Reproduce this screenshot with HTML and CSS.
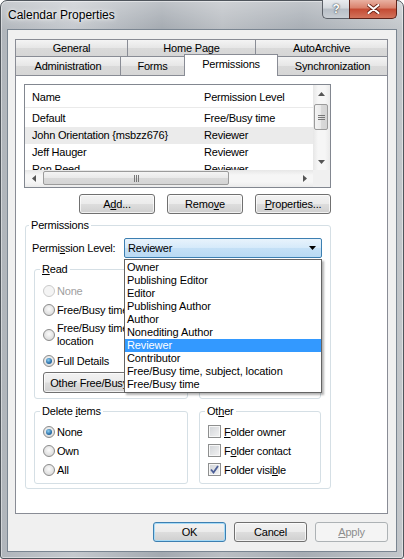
FILE: index.html
```html
<!DOCTYPE html>
<html lang="en">
<head>
<meta charset="UTF-8">
<title>Calendar Properties</title>
<link rel="stylesheet" href="styles.css">
</head>
<body>
<div class="window">
    <div class="titlebar">
        <span class="title">Calendar Properties</span>
        <div class="caption">
            <span class="cap help">?</span>
            <span class="cap close">
                <svg width="13" height="10" viewBox="0 0 13 10"><path d="M1.5 1 L11.5 9 M11.5 1 L1.5 9" stroke="#6b2418" stroke-width="3.8" stroke-linecap="round"/><path d="M1.5 1 L11.5 9 M11.5 1 L1.5 9" stroke="#fff" stroke-width="2.1" stroke-linecap="round"/></svg>
            </span>
        </div>
    </div>

    <div class="client">
        <div class="tabs">
            <div class="tab-row">
                <div class="tab t-general">General</div>
                <div class="tab t-home">Home Page</div>
                <div class="tab t-archive last">AutoArchive</div>
            </div>
            <div class="tab-row row2">
                <div class="tab t-admin">Administration</div>
                <div class="tab t-forms">Forms</div>
                <div class="tab t-perm active">Permissions</div>
                <div class="tab t-sync last">Synchronization</div>
            </div>
        </div>

        <div class="panel">
            <!-- user list -->
            <div class="listbox">
                <div class="list-view">
                    <div class="list-head"><span>Name</span><span>Permission Level</span></div>
                    <div class="list-row"><span>Default</span><span>Free/Busy time</span></div>
                    <div class="list-row hover"><span>John Orientation {msbzz676}</span><span>Reviewer</span></div>
                    <div class="list-row"><span>Jeff Hauger</span><span>Reviewer</span></div>
                    <div class="list-row"><span>Ron Reed</span><span>Reviewer</span></div>
                </div>
                <div class="vscroll">
                    <div class="sb-btn"><svg width="7" height="4" viewBox="0 0 7 4"><polygon points="0,4 3.5,0 7,4" fill="#555"/></svg></div>
                    <div class="thumb v-thumb"><span class="grip"></span></div>
                    <div class="sb-fill"></div>
                    <div class="sb-btn"><svg width="7" height="4" viewBox="0 0 7 4"><polygon points="0,0 7,0 3.5,4" fill="#555"/></svg></div>
                </div>
                <div class="hscroll">
                    <div class="sb-btn"><svg width="4" height="7" viewBox="0 0 4 7"><polygon points="4,0 4,7 0,3.5" fill="#555"/></svg></div>
                    <div class="thumb h-thumb"><span class="grip"></span></div>
                    <div class="sb-fill"></div>
                    <div class="sb-btn"><svg width="4" height="7" viewBox="0 0 4 7"><polygon points="0,0 4,3.5 0,7" fill="#555"/></svg></div>
                </div>
                <div class="sb-corner"></div>
            </div>

            <div class="list-buttons">
                <button class="btn">A<u>d</u>d...</button>
                <button class="btn">Remo<u>v</u>e</button>
                <button class="btn"><u>P</u>roperties...</button>
            </div>

            <fieldset class="group perms">
                <legend>Permissions</legend>
                <div class="level-row">
                    <span class="level-label">Permi<u>s</u>sion Level:</span>
                    <div class="combo">
                        <span>Reviewer</span>
                        <svg width="7" height="4" viewBox="0 0 7 4"><polygon points="0,0 7,0 3.5,4" fill="#000"/></svg>
                        <ul class="dropdown">
                            <li>Owner</li>
                            <li>Publishing Editor</li>
                            <li>Editor</li>
                            <li>Publishing Author</li>
                            <li>Author</li>
                            <li>Nonediting Author</li>
                            <li class="selected">Reviewer</li>
                            <li>Contributor</li>
                            <li>Free/Busy time, subject, location</li>
                            <li>Free/Busy time</li>
                        </ul>
                    </div>
                </div>

                <div class="subgroups">
                    <fieldset class="group top-group">
                        <legend><u>R</u>ead</legend>
                        <div class="opt disabled"><span class="radio"></span><span>None</span></div>
                        <div class="opt"><span class="radio"></span><span>Free/Busy time</span></div>
                        <div class="opt tall"><span class="radio"></span><span>Free/Busy time, subject,<br>location</span></div>
                        <div class="opt"><span class="radio on"></span><span>Full Details</span></div>
                        <button class="btn other-btn">Other Free/Busy...</button>
                    </fieldset>
                    <fieldset class="group top-group">
                        <legend><u>W</u>rite</legend>
                        <div class="opt"><span class="check"></span><span>Create items</span></div>
                        <div class="opt"><span class="check"></span><span>Create subfolders</span></div>
                        <div class="opt"><span class="check"></span><span>Edit own</span></div>
                        <div class="opt"><span class="check"></span><span>Edit all</span></div>
                    </fieldset>
                    <fieldset class="group low-group">
                        <legend>Delete <u>i</u>tems</legend>
                        <div class="opt"><span class="radio on"></span><span>None</span></div>
                        <div class="opt"><span class="radio"></span><span>Own</span></div>
                        <div class="opt"><span class="radio"></span><span>All</span></div>
                    </fieldset>
                    <fieldset class="group low-group">
                        <legend>Ot<u>h</u>er</legend>
                        <div class="opt"><span class="check"></span><span><u>F</u>older owner</span></div>
                        <div class="opt"><span class="check"></span><span>F<u>o</u>lder contact</span></div>
                        <div class="opt"><span class="check on"><svg width="11" height="11" viewBox="0 0 11 11"><path d="M2 5.5 L4.5 8.5 L9 2" stroke="#4a5d96" stroke-width="1.8" fill="none"/></svg></span><span>Folder visi<u>b</u>le</span></div>
                    </fieldset>
                </div>
            </fieldset>
        </div>

        <div class="dialog-buttons">
            <button class="btn default">OK</button>
            <button class="btn">Cancel</button>
            <button class="btn" disabled><u>A</u>pply</button>
        </div>
    </div>
</div>
</body>
</html>
```

FILE: styles.css
```css
* {
    box-sizing: border-box;
}
body {
    margin: 0;
    font-family: "Liberation Sans", Arial, sans-serif;
    font-size: 11px;
    letter-spacing: -0.2px;
    color: #000;
    background: #fff;
}
u {
    text-decoration: underline;
    text-underline-offset: 1px;
}

/* window frame */
.window {
    width: 404px;
    height: 559px;
    display: flex;
    flex-direction: column;
    padding: 0 6px 6px;
    border: 1px solid #4f555c;
    border-radius: 7px 7px 3px 3px;
    box-shadow: inset 0 0 0 1px rgba(255, 255, 255, 0.45);
    background:
        linear-gradient(180deg, rgba(255, 255, 255, 0.3), rgba(255, 255, 255, 0) 30px),
        linear-gradient(90deg, #b0b5bb 0%, #c5c9ce 18%, #a3a9b0 40%, #babec3 55%, #a7adb4 75%, #c3c7cb 100%);
}
.titlebar {
    height: 28px;
    display: flex;
    justify-content: space-between;
    align-items: flex-start;
}
.title {
    margin: 7px 0 0 1px;
    font-size: 12px;
    letter-spacing: 0;
    line-height: 14px;
    text-shadow: 0 0 6px #fff, 0 0 3px #fff;
}
.caption {
    display: flex;
    margin-top: -1px;
}
.cap {
    height: 19px;
    display: flex;
    align-items: center;
    justify-content: center;
    border: 1px solid #5b6068;
    border-top: none;
}
.help {
    width: 27px;
    border-right: none;
    border-radius: 0 0 0 5px;
    background: linear-gradient(#e9ecef, #d3d8dd 45%, #b7bec6 50%, #c9ced4);
    color: #fff;
    font-weight: bold;
    font-size: 12px;
    text-shadow: 0 0 2px #44494f, 0 0 1px #44494f;
}
.close {
    width: 48px;
    border-color: #5e2219;
    border-radius: 0 0 5px 0;
    background: linear-gradient(#e9b1a2, #d9806b 45%, #c44a33 50%, #d2735b);
}

/* client area */
.client {
    flex: 1;
    display: flex;
    flex-direction: column;
    padding: 9px 8px 0 7px;
    background: #f0f0f0;
    border: 1px solid #7a8591;
}

/* tabs */
.tab-row {
    display: flex;
    align-items: flex-start;
}
.tab {
    height: 17px;
    line-height: 16px;
    text-align: center;
    border: 1px solid #898c95;
    border-bottom: none;
    border-right: none;
    background: linear-gradient(#f4f4f4, #e6e6e6 50%, #dadada 51%, #d6d6d6);
}
.tab.last {
    border-right: 1px solid #898c95;
}
.row2 .tab {
    height: 19px;
    line-height: 19px;
}
.t-general { width: 112px; }
.t-home { width: 128px; }
.t-archive { width: 133px; }
.t-admin { width: 105px; }
.t-forms { width: 64px; }
.t-perm { width: 94px; }
.t-sync { width: 110px; border-left: none; }
.row2 .tab.active {
    position: relative;
    z-index: 1;
    height: 22px;
    margin: -2px 0 -1px;
    line-height: 19px;
    background: #fff;
    border-right: 1px solid #898c95;
}

.panel {
    height: 439px;
    padding: 8px 0 0 8px;
    background: #fff;
    border: 1px solid #898c95;
}

/* list view */
.listbox {
    width: 307px;
    height: 104px;
    display: grid;
    grid-template-columns: 1fr 17px;
    grid-template-rows: 1fr 17px;
    border: 1px solid #828790;
}
.list-view {
    overflow: hidden;
}
.list-head,
.list-row {
    display: grid;
    grid-template-columns: 172px 1fr;
    padding-left: 7px;
    white-space: nowrap;
}
.list-head {
    height: 23px;
    padding-top: 6px;
    border-bottom: 1px solid #eaeaea;
    margin-bottom: 2px;
}
.list-row {
    height: 17px;
    line-height: 17px;
}
.list-row.hover {
    background: #ebebeb;
}
.vscroll,
.hscroll {
    display: flex;
    background: linear-gradient(90deg, #e7e7e7, #f6f6f6 30%, #f6f6f6 70%, #ebebeb);
}
.vscroll {
    flex-direction: column;
}
.hscroll {
    background: linear-gradient(#e7e7e7, #f6f6f6 30%, #f6f6f6 70%, #ebebeb);
}
.sb-btn {
    flex: 0 0 17px;
    display: flex;
    align-items: center;
    justify-content: center;
}
.sb-fill {
    flex: 1;
}
.thumb {
    display: flex;
    align-items: center;
    justify-content: center;
    border: 1px solid #9b9b9b;
    border-radius: 2px;
}
.v-thumb {
    height: 26px;
    margin: 2px 2px 0 1px;
    background: linear-gradient(90deg, #f4f4f4, #e9e9e9 50%, #d9d9d9 51%, #d5d5d5);
}
.h-thumb {
    width: 186px;
    margin: 1px 0 2px 1px;
    background: linear-gradient(#f4f4f4, #e9e9e9 50%, #d9d9d9 51%, #d5d5d5);
}
.grip {
    width: 7px;
    height: 5px;
    background: repeating-linear-gradient(#777 0 1px, transparent 1px 2px);
}
.h-thumb .grip {
    width: 5px;
    height: 7px;
    background: repeating-linear-gradient(90deg, #777 0 1px, transparent 1px 2px);
}
.sb-corner {
    background: #f0f0f0;
}

/* buttons */
.btn {
    height: 20px;
    padding: 0;
    font: inherit;
    letter-spacing: inherit;
    color: #000;
    border: 1px solid #707070;
    border-radius: 3px;
    background: linear-gradient(#f2f2f2, #ebebeb 48%, #dddddd 52%, #cfcfcf);
    box-shadow: inset 0 0 0 1px rgba(255, 255, 255, 0.7);
}
.btn.default {
    border-color: #3c7fb1;
    box-shadow: inset 0 0 0 1px #a6daf6;
}
.btn:disabled {
    color: #8d8d8d;
    border-color: #adb2b5;
    background: #f4f4f4;
    box-shadow: none;
}
.list-buttons {
    width: 307px;
    display: flex;
    justify-content: flex-end;
    gap: 12px;
    margin-top: 6px;
}
.list-buttons .btn {
    width: 76px;
}
.dialog-buttons {
    display: flex;
    justify-content: flex-end;
    gap: 8px;
    margin-top: 8px;
}
.dialog-buttons .btn {
    width: 73px;
}

/* group boxes */
.group {
    margin: 0;
    min-width: 0;
    padding: 5px 8px;
    border: 1px solid #d5dfe5;
    border-radius: 3px;
}
.group legend {
    padding: 0 2px;
    margin-left: -3px;
    line-height: 14px;
}
.perms {
    width: 306px;
    margin: 4px 0 0 1px;
    padding: 6px 7px 4px 6px;
}
.level-row {
    display: flex;
    align-items: center;
    height: 20px;
}
.level-label {
    width: 92px;
}
.combo {
    position: relative;
    width: 198px;
    height: 20px;
    display: flex;
    align-items: center;
    justify-content: space-between;
    padding: 0 5px 0 3px;
    border: 1px solid #3c7fb1;
    border-radius: 2px;
    background: linear-gradient(#e8f3fc, #d6eafa 48%, #c4e0f6 52%, #b9daf3);
}
.dropdown {
    position: absolute;
    z-index: 5;
    top: calc(100% + 2px);
    left: -1px;
    width: 198px;
    margin: 0;
    padding: 1px 0;
    list-style: none;
    background: #fff;
    border: 1px solid #646464;
    box-shadow: 2px 2px 2px rgba(0, 0, 0, 0.3);
    letter-spacing: -0.1px;
}
.dropdown li {
    height: 13px;
    line-height: 13px;
    padding-left: 2px;
    white-space: nowrap;
}
.dropdown li.selected {
    background: #3399ff;
    color: #fff;
}
.subgroups {
    display: grid;
    grid-template-columns: 154px 122px;
    column-gap: 11px;
    row-gap: 5px;
    margin: 4px 0 0 2px;
}
.top-group {
    padding-top: 5px;
}
.low-group {
    padding-top: 4px;
    padding-bottom: 4px;
}
.opt {
    height: 19px;
    display: flex;
    align-items: center;
    gap: 2px;
    white-space: nowrap;
}
.opt.tall {
    height: 32px;
    line-height: 13px;
}
.opt.disabled {
    color: #a0a0a0;
}
.radio {
    flex: 0 0 12px;
    height: 12px;
    display: flex;
    align-items: center;
    justify-content: center;
    border: 1px solid #8b8b8b;
    border-radius: 50%;
    background: radial-gradient(circle at 50% 40%, #fbfbfb, #e2e2e2 60%, #cfcfcf);
}
.opt.disabled .radio {
    border-color: #cacaca;
    background: #f4f4f4;
}
.radio.on::after {
    content: "";
    width: 6px;
    height: 6px;
    border-radius: 50%;
    background: radial-gradient(circle at 40% 35%, #8fd0f2, #2a6fa8 60%, #1c4e7d);
}
.check {
    flex: 0 0 13px;
    height: 13px;
    margin-right: 1px;
    display: flex;
    align-items: center;
    justify-content: center;
    border: 1px solid #8e8f8f;
    background: linear-gradient(135deg, #d0d3d7, #f3f3f3);
    box-shadow: inset 0 0 0 1px #f7f7f7;
}
.other-btn {
    width: 100px;
    height: 21px;
    margin-top: 2px;
}
```
